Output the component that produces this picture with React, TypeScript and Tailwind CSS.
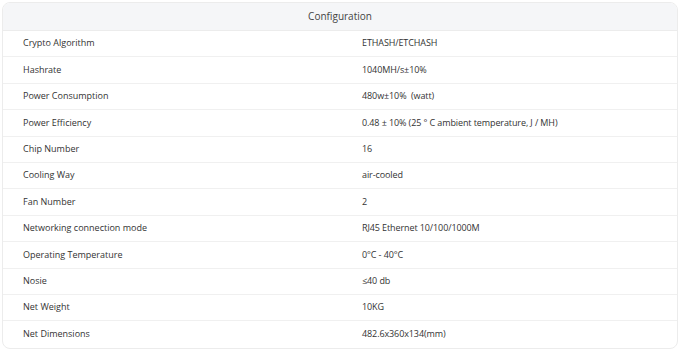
import React from 'react';

const specs: [string, string][] = [
  ['Crypto Algorithm', 'ETHASH/ETCHASH'],
  ['Hashrate', '1040MH/s±10%'],
  ['Power Consumption', '480w±10%  (watt)'],
  ['Power Efficiency', '0.48 ± 10% (25 ° C ambient temperature, J / MH)'],
  ['Chip Number', '16'],
  ['Cooling Way', 'air-cooled'],
  ['Fan Number', '2'],
  ['Networking connection mode', 'RJ45 Ethernet 10/100/1000M'],
  ['Operating Temperature', '0°C - 40°C'],
  ['Nosie', '≤40 db'],
  ['Net Weight', '10KG'],
  ['Net Dimensions', '482.6x360x134(mm)'],
];

const App: React.FC = () => {
  return (
    <div className="w-[680px] h-[350px] bg-white p-[2px] font-['Open_Sans',sans-serif] text-[9px] text-[#333]">
      <div className="rounded-lg border border-[#ececec] overflow-hidden">
        {/* Header */}
        <div className="h-[28px] bg-[#f5f6f8] border-b border-[#ececec] flex items-center justify-center text-[10px] text-[#444] pb-[1px]">
          Configuration
        </div>

        {/* Rows */}
        {specs.map(([label, value], i) => (
          <div
            key={label}
            className={`h-[26.4px] flex items-center pb-[1px] ${i < specs.length - 1 ? 'border-b border-[#f0f0f0]' : ''}`}
          >
            <div className="w-[338px] pl-[20px]">{label}</div>
            <div className="flex-1 pl-[21px] whitespace-pre tracking-[-0.1px]">{value}</div>
          </div>
        ))}
      </div>
    </div>
  );
};

export default App;
